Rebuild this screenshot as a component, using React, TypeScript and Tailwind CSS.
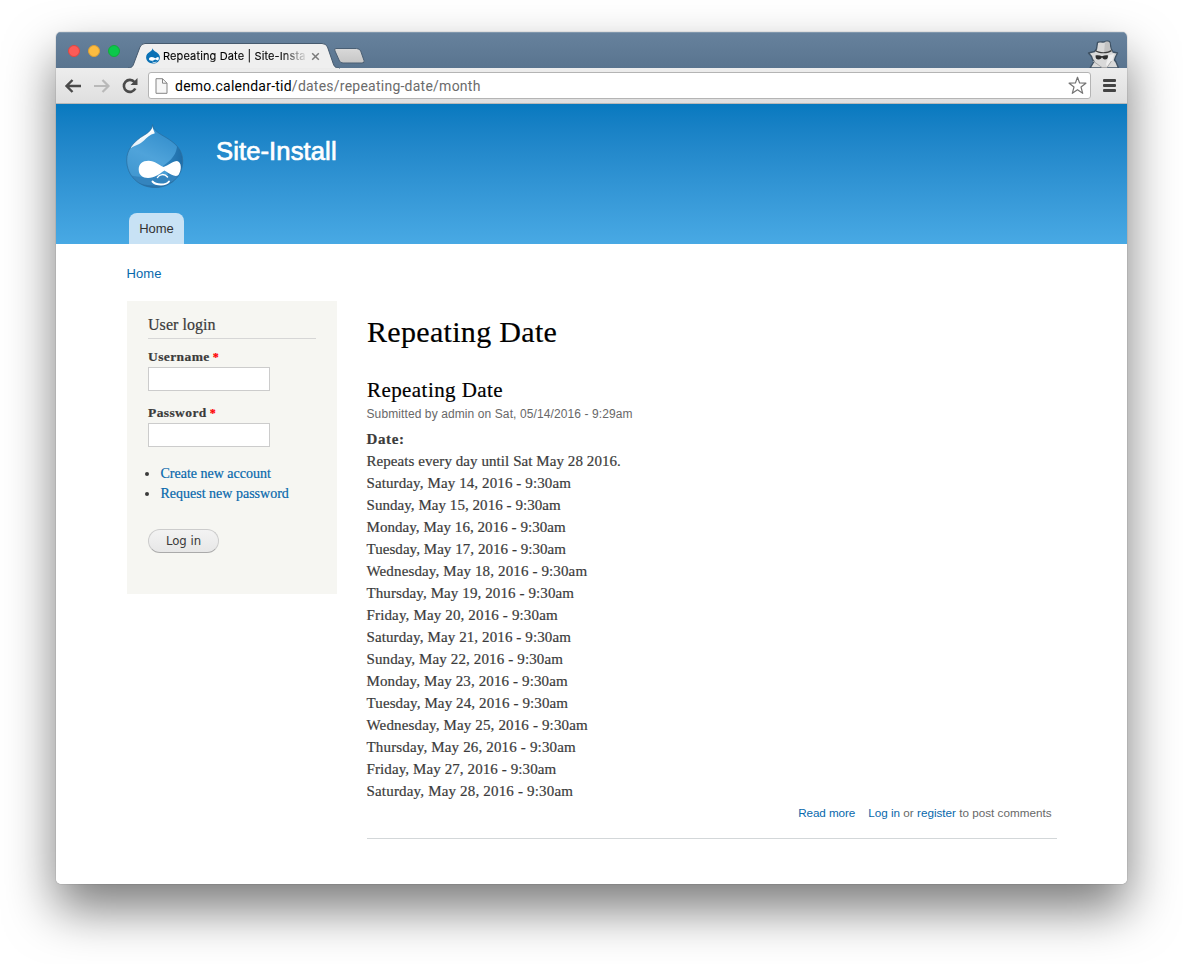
import React from "react";

const serif = "font-['Liberation_Serif',serif] [-webkit-text-stroke:0.2px_currentColor]";
const sans = "font-['Liberation_Sans',sans-serif] [-webkit-text-stroke:0px]";

const dates: [string, string][] = [
  ["Saturday, May 14, 2016 - 9:30am", "tracking-[0.11px]"],
  ["Sunday, May 15, 2016 - 9:30am", "tracking-[0.05px]"],
  ["Monday, May 16, 2016 - 9:30am", "tracking-[0.05px]"],
  ["Tuesday, May 17, 2016 - 9:30am", "tracking-[0.05px]"],
  ["Wednesday, May 18, 2016 - 9:30am", "tracking-[0.13px]"],
  ["Thursday, May 19, 2016 - 9:30am", "tracking-[0.1px]"],
  ["Friday, May 20, 2016 - 9:30am", "tracking-[0.15px]"],
  ["Saturday, May 21, 2016 - 9:30am", "tracking-[0.11px]"],
  ["Sunday, May 22, 2016 - 9:30am", "tracking-[0.13px]"],
  ["Monday, May 23, 2016 - 9:30am", "tracking-[0.12px]"],
  ["Tuesday, May 24, 2016 - 9:30am", "tracking-[0.12px]"],
  ["Wednesday, May 25, 2016 - 9:30am", "tracking-[0.15px]"],
  ["Thursday, May 26, 2016 - 9:30am", "tracking-[0.16px]"],
  ["Friday, May 27, 2016 - 9:30am", "tracking-[0.1px]"],
  ["Saturday, May 28, 2016 - 9:30am", "tracking-[0.18px]"],
];

function DrupalLogo() {
  const outline =
    "M26.500 .6C27 6 33 9.500 40 13.500C50 19.500 56.700 26 56.700 37C56.700 53 44 63.500 29 63.500C13 63.500 .7 52 .7 36C.7 26 7 19 14.500 13.500C21 9.500 26 7 26.500 .6Z";
  return (
    <svg width="58" height="65" viewBox="0 0 58 65" className="block">
      <defs>
        <linearGradient id="drop" x1="0.6" y1="0" x2="0.2" y2="1">
          <stop offset="0" stopColor="#2f8bca" />
          <stop offset="0.5" stopColor="#4fa3da" />
          <stop offset="1" stopColor="#3c93cd" />
        </linearGradient>
        <linearGradient id="shade" x1="0" y1="0" x2="1" y2="0">
          <stop offset="0" stopColor="#2f86c2" />
          <stop offset="1" stopColor="#1d6ba6" />
        </linearGradient>
        <linearGradient id="shine" x1="0.3" y1="0" x2="0.7" y2="1">
          <stop offset="0.4" stopColor="#fff" />
          <stop offset="1" stopColor="#fff" stopOpacity="0.75" />
        </linearGradient>
        <clipPath id="dropClip">
          <path d={outline} />
        </clipPath>
      </defs>
      <g clipPath="url(#dropClip)">
        <rect width="58" height="65" fill="url(#drop)" />
        <path d="M51 18C52 29 46 36 37 42L44 54H58V20Z" fill="url(#shade)" />
        <path d="M1 50C5 52 12 53 18 53L56 50L44 65H10Z" fill="#3484be" />
        <path d="M8 57C18 63 40 63 50 55L44 65H14Z" fill="#2974ad" />
        <path d="M26.300 1C26.500 6 29.500 8.500 28.500 9.500C24 10.500 21 13.500 18 16.500C14 20.500 9 21.500 5 24C4 22.500 5 20 8 17.500C11 15 14 13.500 17 11.800C22 9 25.500 7 26.300 1Z" fill="url(#shine)" />
      </g>
      <path d={outline} fill="none" stroke="#2a6d9e" strokeWidth="0.7" />
      <path d="M22.500 36.800C29 36.800 33 41.500 37.500 43C42 41.500 47 37 51 37C56 38 55.500 46 53 50C51 54 46 51.500 38.500 46.500C33 50 29 54 22 54C16.500 54 12.700 51 12.700 45.500C12.700 40 16.500 36.800 22.500 36.800Z" fill="#fff" />
      <path d="M31.500 53.500C33.500 50 38.500 49.500 41.500 53" fill="none" stroke="#fff" strokeWidth="1.500" strokeLinecap="round" />
      <path d="M26.500 57.500C30 61.500 40 61.500 43 57.500" fill="none" stroke="#fff" strokeWidth="1.900" strokeLinecap="round" />
    </svg>
  );
}

function Favicon() {
  return (
    <svg width="14" height="16" viewBox="0 0 14 16" className="block">
      <path d="M6.500 .3C7 2.500 8.500 3 10.500 4.300C12.800 5.800 13.900 7.500 13.900 9.400C13.900 13 10.800 15.500 7 15.500C3 15.500 .1 12.800 .1 9.300C.1 6.800 1.800 5.200 3.600 4.100C5.200 3.100 6.300 2.400 6.500 .3Z" fill="#0a71b5" />
      <path d="M5.800 9C7.500 9 8.600 10.200 9.300 10.200C10.200 10 11.300 8.800 12.300 9.100C13.300 9.800 12.900 12.200 12 12.500C11 12.600 10.300 11.600 9.400 11.500C8.300 11.800 7.300 12.900 5.500 12.800C3.900 12.700 3 12 3 11C3 9.800 4.200 9 5.800 9Z" fill="#fff" />
      <path d="M6.500 14C7.500 14.700 9.300 14.700 10.400 13.900" fill="none" stroke="#fff" strokeWidth=".9" />
    </svg>
  );
}

function Incognito() {
  return (
    <svg width="34" height="28" viewBox="0 0 34 28" className="block">
      <path
        d="M3 28L7 21.500L5.500 19.500L4.500 16.500L1.500 13L7.500 11.500L9.500 9L10.500 2.500C12 1 14.500 2.500 17 1.800C19.500 .8 22.500 1 23 2.500L24 8.500L26 12L30.500 13L28.500 17L27.500 20L29 22L31.500 28Z"
        fill="#d9d9d9"
        stroke="#3f5264"
        strokeWidth="1.400"
        strokeLinejoin="round"
      />
      <path d="M18 2C20 1.300 22 1.500 22.500 2.800L23.500 9L25.500 12L17 13Z" fill="#c2c2c2" />
      <path d="M8.500 10.500C12 13.500 21 13.500 24.500 10.500" fill="none" stroke="#3d3d3d" strokeWidth="1.200" />
      <path d="M8.500 15.500C11 15 13 15.500 15 16.300C17 15.500 19 15 21 15.500C21 18.500 20 19.500 18 19.500C16.500 19.500 15.500 18.500 15 17.300C14.500 18.500 13.500 19.500 11.500 19.500C9.500 19.500 8.500 18.500 8.500 15.500Z" fill="#2d2d2d" />
      <path d="M22 15L27 14L25.500 20L20 27L19 24Z" fill="#eee" />
      <path d="M6 21L15 27.500L20 27.500L24.500 21" fill="none" stroke="#a9a9a9" strokeWidth="1" />
    </svg>
  );
}

function TitleBar() {
  return (
    <div className="relative flex h-[36px] items-start bg-linear-to-b from-[#67829d] to-[#59748f] shadow-[inset_0_1px_0_#8097ad]">
      <div className="flex gap-2 pl-3 pt-[13px]">
        <span className="size-3 rounded-full border border-[#e2463f] bg-[#fc5b57]" />
        <span className="size-3 rounded-full border border-[#dfa034] bg-[#fdbc40]" />
        <span className="size-3 rounded-full border border-[#12ac3a] bg-[#0bc84b]" />
      </div>
      <div className="absolute left-[72px] top-[10.5px]">
        <svg width="240" height="26" viewBox="0 0 240 26" className="block">
          <defs>
            <linearGradient id="newtab" x1="0" y1="0" x2="0" y2="1">
              <stop offset="0" stopColor="#d9d9d9" />
              <stop offset="1" stopColor="#c6c6c6" />
            </linearGradient>
          </defs>
          <path d="M0 25C4 25 5 23 6 20L12 4Q13.500 .5 17 .5H194Q198 .5 199.500 4L205 20C206 23 207 25 211 25V26H0Z" fill="#efefef" stroke="#465a6e" strokeWidth="1" />
          <rect y="25" width="211" height="1" fill="#ebebeb" />
          <path d="M208 5.500H228.500Q231.500 5.500 232.700 8L236 17.500Q237 20 234 20H215Q212.500 20 211.500 18L207 8Q205.800 5.500 208 5.500Z" fill="url(#newtab)" stroke="#4a5f74" strokeWidth="1" />
        </svg>
      </div>
      <div className="absolute left-[90px] top-[16px] flex h-4 items-center">
        <Favicon />
        <span className="ml-[3px] w-[144px] whitespace-nowrap bg-linear-to-r from-black from-82% to-black/5 bg-clip-text font-['Inter',sans-serif] text-[11px] leading-4 tracking-[0.13px] text-transparent [-webkit-text-stroke:0.1px_transparent]">
          Repeating Date | Site-Insta
        </span>
        <svg width="9" height="9" viewBox="0 0 9 9" className="ml-[4px]">
          <path d="M1.200 1.200L7.800 7.800M7.800 1.200L1.200 7.800" stroke="#7a7a7a" strokeWidth="1.500" />
        </svg>
      </div>
      <div className="absolute right-[6px] top-[8px]">
        <Incognito />
      </div>
    </div>
  );
}

function Toolbar() {
  return (
    <div className="flex h-[36px] items-center border-b border-[#b9b9b9] bg-linear-to-b from-[#ededed] to-[#dfdfdf] pl-2">
      <svg width="80" height="20" viewBox="0 0 80 20" className="block">
        <path d="M17 10H3M8.500 4L2.500 10L8.500 16" fill="none" stroke="#4a4a4a" strokeWidth="2.400" />
        <path d="M30 10H44M38.500 4L44.500 10L38.500 16" fill="none" stroke="#b9b9b9" strokeWidth="2.200" />
        <path d="M70.500 6A6 6 0 1 0 71.300 12.500" fill="none" stroke="#4a4a4a" strokeWidth="2.600" />
        <path d="M73.500 2V9H66.500Z" fill="#4a4a4a" />
      </svg>
      <div className="ml-1 flex h-[27px] w-[943px] items-center rounded-[3px] border border-[#b4b4b4] bg-white pl-[6px] pr-[3px]">
        <svg width="13" height="16" viewBox="0 0 13 16" className="block">
          <path d="M1 .7H7.500L12 5.200V15.300H1ZM7.500 .7V5.200H12" fill="#f7f7f7" stroke="#858585" />
        </svg>
        <span className="ml-[7px] flex-1 whitespace-nowrap font-['Roboto',sans-serif] text-[14px] leading-5 tracking-[0.24px] text-[#6b6b6b]">
          <span className="text-black">demo.calendar-tid</span>/dates/repeating-date/month
        </span>
        <svg width="19" height="19" viewBox="0 0 19 19" className="block">
          <path d="M9.500 1.200L11.600 7L17.900 7.200L13 11L14.700 17.300L9.500 13.700L4.300 17.300L6 11L1.100 7.200L7.400 7Z" fill="#fff" stroke="#757575" strokeWidth="1.200" strokeLinejoin="round" />
        </svg>
      </div>
      <div className="ml-3 flex w-[13px] flex-col gap-[2px]">
        <span className="h-[3px] rounded-[1px] bg-[#444]" />
        <span className="h-[3px] rounded-[1px] bg-[#444]" />
        <span className="h-[3px] rounded-[1px] bg-[#444]" />
      </div>
    </div>
  );
}

function SiteHeader() {
  return (
    <header className="flex h-[140px] flex-col justify-between bg-linear-to-b from-[#0779bf] to-[#48a9e4] pl-[70px]">
      <div className="flex pt-[20px]">
        <DrupalLogo />
        <h1 className="ml-[32px] mt-[11px] font-['Liberation_Sans',sans-serif] text-[25.6px] leading-[32px] tracking-[0.1px] text-white [-webkit-text-stroke:0.7px_white]">
          Site-Install
        </h1>
      </div>
      <nav className={`${sans} ml-[3px] h-[31px] w-[55px] rounded-t-[8px] bg-[#c8e2f5] text-center text-[13px] leading-[31px] text-[#333]`}>
        Home
      </nav>
    </header>
  );
}

function Field({ label }: { label: string }) {
  return (
    <label className="mb-[13px] block">
      <span className="block text-[13.5px] font-bold leading-[18px] tracking-[0.4px]">
        {label}
        <span className="ml-[3px] text-[12px] text-[#f00]">*</span>
      </span>
      <input className="mt-[1px] block h-6 w-[122px] border border-[#ccc] bg-white" />
    </label>
  );
}

function LoginBlock() {
  return (
    <aside className={`${serif} h-[293px] w-[210px] bg-[#f6f6f2] px-[21px] pt-[14px] text-[#3b3b3b]`}>
      <h2 className="mb-[9px] h-[24px] border-b border-[#d6d6d6] text-[16px] leading-[20px] tracking-[0.05px]">User login</h2>
      <Field label="Username" />
      <Field label="Password" />
      <ul className="mt-[17px] text-[14px] leading-5 text-[#0768ac]">
        {["Create new account", "Request new password"].map((t) => (
          <li key={t} className="flex items-center">
            <span className="-ml-[3px] mr-[11.5px] size-1 rounded-full bg-[#3b3b3b]" />
            <a>{t}</a>
          </li>
        ))}
      </ul>
      <button className="mt-[25px] block h-6 w-[71px] rounded-full border border-[#ccc] border-b-[#aaa] bg-linear-to-b from-[#f3f3f3] to-[#e7e7e7] font-['DejaVu_Sans',sans-serif] text-[11.7px] leading-[21px] text-[#3a3a3a] [-webkit-text-stroke:0px]">
        Log in
      </button>
    </aside>
  );
}

function Article() {
  return (
    <article className={`${serif} w-[690px] text-[15px] leading-[22px] text-[#3b3b3b]`}>
      <h1 className="mt-[13px] text-[30px] leading-9 tracking-[0.32px] text-black">Repeating Date</h1>
      <h2 className="mt-[27px] text-[21px] leading-[26px] tracking-[0.43px] text-black">Repeating Date</h2>
      <p className={`${sans} -ml-[0.5px] h-[25px] text-[12px] leading-[22px] tracking-[0.1px] text-[#686868]`}>
        Submitted by admin on Sat, 05/14/2016 - 9:29am
      </p>
      <div className="-ml-[0.5px]">
        <p className="text-[15px] font-bold tracking-[0.6px]">Date:</p>
        <p className="tracking-[0.07px]">Repeats every day until Sat May 28 2016.</p>
        {dates.map(([text, tracking]) => (
          <p key={text} className={tracking}>{text}</p>
        ))}
      </div>
      <footer className={`${sans} flex h-[37px] justify-end gap-[13px] border-b border-[#d3d7d9] pr-[5.5px] text-[11.7px] leading-[22px] text-[#686868]`}>
        <a className="tracking-[-0.08px] text-[#0768ac]">Read more</a>
        <span>
          <a className="text-[#0768ac]">Log in</a> or <a className="text-[#0768ac]">register</a> to post comments
        </span>
      </footer>
    </article>
  );
}

export default function App() {
  return (
    <div className="h-[964px] w-[1183px] overflow-hidden bg-white px-[56px] pt-8">
      <div className="h-[852px] w-[1071px] rounded-[5px] shadow-[0_0_1px_rgba(0,0,0,0.6),0_25px_50px_rgba(0,0,0,0.52)]">
        <div className="h-full overflow-hidden rounded-[5px] bg-white">
          <TitleBar />
          <Toolbar />
          <SiteHeader />
          <main className="pl-[71px]">
            <nav className={`${sans} -ml-[0.5px] h-[57px] pt-5 text-[13px] leading-[19px] tracking-[0.1px] text-[#0768ac]`}>Home</nav>
            <div className="flex gap-[30px]">
              <LoginBlock />
              <Article />
            </div>
          </main>
        </div>
      </div>
    </div>
  );
}
